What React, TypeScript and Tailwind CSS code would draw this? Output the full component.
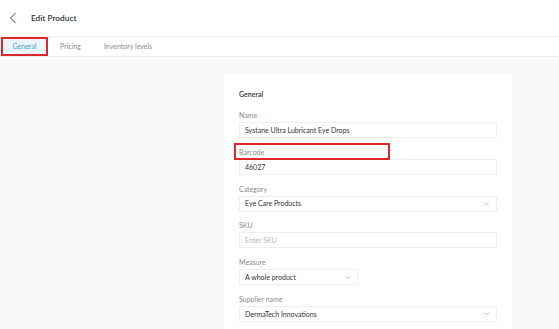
import React from 'react'

interface Field {
  label: string
  value?: string
  placeholder?: string
  select?: boolean
  narrow?: boolean
  marked?: boolean
}

const fields: Field[] = [
  { label: 'Name', value: 'Systane Ultra Lubricant Eye Drops' },
  { label: 'Barcode', value: '46027', marked: true },
  { label: 'Category', value: 'Eye Care Products', select: true },
  { label: 'SKU', placeholder: 'Enter SKU' },
  { label: 'Measure', value: 'A whole product', select: true, narrow: true },
  { label: 'Supplier name', value: 'DermaTech Innovations', select: true }
]

const Chevron: React.FC = () => (
  <svg className="w-[7px] h-[7px] text-[#b5b5b5]" viewBox="0 0 10 10" fill="none" stroke="currentColor" strokeWidth="1.2">
    <path d="M2 3.5l3 3 3-3" />
  </svg>
)

const App: React.FC = () => {
  return (
    <div className="w-[559px] h-[329px] overflow-hidden bg-[#f8f9fb] font-['Lato','Open_Sans',sans-serif] text-[#333]">
      <div className="h-[37px] bg-white border-b border-[#eeeeee] flex items-center">
        <svg className="ml-[9px] w-[8px] h-[12px] text-[#8a8a8a]" viewBox="0 0 8 12" fill="none" stroke="currentColor" strokeWidth="1.1">
          <path d="M6.5 1L1.5 6l5 5" />
        </svg>
        <span className="ml-[14px] text-[8.3px] font-semibold text-[#333]">Edit Product</span>
      </div>
      <div className="h-[20px] bg-white border-b border-[#eeeeee] flex items-stretch text-[7px] text-[#8a8a8a]">
        <div className="relative ml-[1px] w-[47px] bg-[#eaf5fb] flex items-center justify-center text-[#4ba2c6]">
          General
          <span className="absolute inset-0 border-2 border-[#e0262b]" />
        </div>
        <div className="ml-[12px] flex items-center">Pricing</div>
        <div className="ml-[23px] flex items-center">Inventory levels</div>
      </div>
      <div className="pt-[18px] pl-[224px]">
        <div className="w-[288px] bg-white px-[15px] pt-[15px] pb-[10px]">
          <div className="text-[7px] font-semibold text-[#333] leading-[9px]">General</div>
          <div className="mt-[12px] flex flex-col gap-[9.8px]">
            {fields.map(field => (
              <div key={field.label}>
                <div className="relative text-[7px] text-[#8a8a8a] leading-[9px] h-[9px]">
                  {field.label}
                  {field.marked && <span className="absolute left-[-5px] top-[-5px] w-[156px] h-[17px] border-2 border-[#e0262b]" />}
                </div>
                <div
                  className={`mt-[2px] h-[16px] border border-[#efefef] flex items-center justify-between pl-[5px] pr-[6px] text-[7px] ${field.narrow ? 'w-[119px]' : 'w-full'}`}
                >
                  {field.value ? (
                    <span className="text-[#333]">{field.value}</span>
                  ) : (
                    <span className="text-[#b8b8b8]">{field.placeholder}</span>
                  )}
                  {field.select && <Chevron />}
                </div>
              </div>
            ))}
          </div>
        </div>
      </div>
    </div>
  )
}

export default App
